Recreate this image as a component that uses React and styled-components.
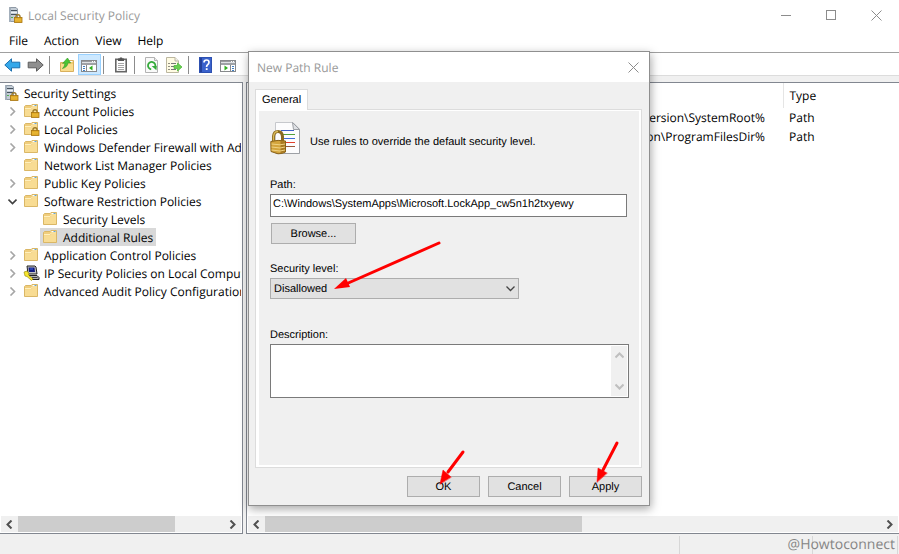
import React, { useState } from 'react';
import styled, { createGlobalStyle } from 'styled-components';

const GlobalStyle = createGlobalStyle`
  * {
    box-sizing: border-box;
  }

  body {
    margin: 0;
    background: #f0f0f0;
    color: #000;
    font-family: 'Open Sans', 'Noto Sans', sans-serif;
    font-size: 12px;
    text-rendering: geometricPrecision;
  }

  button, input, select, textarea {
    font: inherit;
    color: inherit;
    margin: 0;
    padding: 0;
    border: none;
    border-radius: 0;
    background: none;
    outline: none;
    text-rendering: inherit;
  }

  svg {
    display: block;
    flex: none;
  }
`;

/* --- Main window --- */
const Window = styled.div`
  position: relative;
  display: flex;
  flex-direction: column;
  min-height: 100vh;
  overflow: hidden;
`;

const TitleBar = styled.header`
  display: flex;
  align-items: center;
  height: 30px;
  padding-left: 8px;
  background: #fff;
  color: #999;
`;

const WindowTitle = styled.h1`
  flex: 1;
  margin: 0 0 0 4px;
  font-size: 12px;
  font-weight: 400;
`;

const CaptionButton = styled.button`
  display: flex;
  align-items: center;
  justify-content: center;
  width: ${props => props.$width || 45}px;
  height: 28px;
  color: #8c8c8c;
`;

const MenuBar = styled.nav`
  display: flex;
  align-items: center;
  gap: 16px;
  height: 22px;
  padding-left: 9px;
  background: #fff;
`;

const MenuItem = styled.button`
  line-height: 20px;
`;

const Toolbar = styled.div`
  display: flex;
  align-items: center;
  height: 24px;
  padding: 1px 0 0 1px;
  background: #fff;
  border-top: 1px solid #a0a0a0;
  border-bottom: 1px solid #dcdcdc;
`;

const ToolButton = styled.button`
  display: flex;
  align-items: center;
  justify-content: center;
  width: 23px;
  height: 21px;
  border: 1px solid ${props => (props.$active ? '#99d1ff' : 'transparent')};
  background: ${props => (props.$active ? '#cce8ff' : 'transparent')};
`;

const ToolSeparator = styled.span`
  width: 1px;
  height: 18px;
  margin: 0 5px 0 2px;
  background: #8c8c8c;
`;

const Panes = styled.main`
  display: flex;
  flex: 1;
  gap: 3px;
  padding-top: 6px;
`;

const Pane = styled.section`
  display: flex;
  flex-direction: column;
  flex: ${props => (props.$width ? `0 0 ${props.$width}px` : '1')};
  min-width: 0;
  background: #fff;
  border: 1px solid #828790;
  border-left-width: ${props => (props.$flush ? 0 : 1)}px;
  border-right-width: ${props => (props.$flush ? 1 : 0)}px;
  overflow: hidden;
`;

const Tree = styled.ul`
  flex: 1;
  margin: 0 1px 0 0;
  padding: 1px 0 0;
  list-style: none;
  overflow: hidden;
`;

const TreeRow = styled.li`
  display: flex;
  align-items: center;
  height: 18px;
  padding-left: ${props => 2 + props.$level * 19}px;
  white-space: nowrap;
`;

const Expander = styled.span`
  display: flex;
  flex: none;
  justify-content: center;
  width: 18px;
  margin-left: -18px;
`;

const TreeLabel = styled.span`
  display: flex;
  flex: none;
  align-items: center;
  gap: 4px;
  height: 18px;
  padding: 0 3px 0 2px;
  background: ${props => (props.$selected ? '#d9d9d9' : 'transparent')};
`;

const RuleTable = styled.table`
  width: 100%;
  border-collapse: collapse;
  table-layout: fixed;

  th, td {
    padding: 0 0 0 6px;
    font-weight: 400;
    text-align: left;
    white-space: nowrap;
  }

  th {
    height: 25px;
  }

  th:first-child {
    width: 536px;
    border-right: 1px solid #e5e5e5;
  }

  td {
    height: 19px;
  }

  td:first-child {
    padding-right: 18px;
    text-align: right;
  }
`;

const TableArea = styled.div`
  flex: 1;
`;

const ScrollRail = styled.div`
  display: flex;
  align-items: stretch;
  height: 17px;
  margin: 0 1px 0 1px;
  background: #f0f0f0;
  border-bottom: 1px solid #fff;
`;

const ScrollButton = styled.button`
  display: flex;
  align-items: center;
  justify-content: center;
  width: 17px;
  color: #505050;
`;

const ScrollTrack = styled.div`
  flex: 1;
`;

const ScrollThumb = styled.div`
  width: ${props => props.$size};
  height: 100%;
  background: #cdcdcd;
`;

const StatusBar = styled.footer`
  position: relative;
  display: flex;
  height: 20px;
  padding: 2px 1px 0 0;
`;

const StatusCell = styled.div`
  flex: ${props => (props.$width ? `0 0 ${props.$width}px` : '1')};
  border-right: 1px solid #d7d7d7;
`;

const Watermark = styled.span`
  position: absolute;
  right: 4px;
  bottom: 0;
  color: #858585;
  font-size: 14px;
  line-height: 18px;
`;

/* --- New Path Rule dialog --- */
const Dialog = styled.div`
  position: absolute;
  top: 51px;
  left: 248px;
  width: 402px;
  background: #f0f0f0;
  border: 1px solid #8f8f8f;
  box-shadow: 1px 3px 9px rgba(0, 0, 0, 0.35);
  font-family: 'Liberation Sans', Arial, sans-serif;
  font-size: 11px;
`;

const DialogTitleBar = styled.div`
  display: flex;
  align-items: center;
  justify-content: space-between;
  height: 30px;
  padding-left: 8px;
  background: #fff;
  color: #999;
  font-family: 'Open Sans', 'Noto Sans', sans-serif;
`;

const DialogTitle = styled.h2`
  margin: 0;
  font-size: 12px;
  font-weight: 400;
`;

const DialogBody = styled.form`
  padding: 7px 7px 8px 6px;
`;

const TabList = styled.div`
  display: flex;
`;

const Tab = styled.button`
  position: relative;
  height: 21px;
  margin-bottom: -1px;
  padding: 0 6px 1px;
  background: #fff;
  border: 1px solid #dcdcdc;
  border-bottom: none;
`;

const TabPanel = styled.div`
  border: 1px solid #dcdcdc;
  background: #fff;
  padding: 1px 2px 2px 3px;
`;

const PanelContent = styled.div`
  display: flex;
  flex-direction: column;
  align-items: flex-start;
  height: 354px;
  padding: 11px 10px 0 11px;
  background: #f0f0f0;
`;

const Intro = styled.div`
  display: flex;
  align-items: center;
  gap: 8px;
  margin-bottom: 23px;
`;

const IntroText = styled.p`
  margin: 6px 0 0;
`;

const FieldLabel = styled.label`
  line-height: 14px;
  margin-bottom: 2px;
`;

const PathInput = styled.input`
  align-self: stretch;
  height: 23px;
  margin-right: 2px;
  padding: 0 2px 3px;
  background: #fff;
  border: 1px solid #7a7a7a;
`;

const PushButton = styled.button`
  width: ${props => props.$width || 73}px;
  height: 21px;
  background: #e1e1e1;
  border: 1px solid #adadad;
`;

const BrowseRow = styled.div`
  padding: 6px 1px 18px;
`;

const SelectBox = styled.div`
  position: relative;
  width: 249px;
  margin-bottom: 29px;

  svg {
    position: absolute;
    top: 6px;
    right: 4px;
    pointer-events: none;
  }
`;

const LevelSelect = styled.select`
  appearance: none;
  display: block;
  width: 100%;
  height: 21px;
  padding: 0 20px 0 3px;
  background: #e1e1e1;
  border: 1px solid #adadad;
`;

const TextBox = styled.div`
  display: flex;
  align-self: stretch;
  height: 54px;
  padding: 1px;
  background: #fff;
  border: 1px solid #7a7a7a;
`;

const DescriptionArea = styled.textarea`
  flex: 1;
  min-width: 0;
  padding: 2px;
  resize: none;
  overflow: hidden;
`;

const VerticalRail = styled.div`
  display: flex;
  flex-direction: column;
  align-items: center;
  justify-content: space-between;
  width: 16px;
  padding: 5px 0;
  background: #f0f0f0;
  color: #bfbfbf;
`;

const DialogButtons = styled.div`
  display: flex;
  justify-content: flex-end;
  gap: 8px;
  margin-top: 8px;
`;

const Callouts = styled.svg`
  position: absolute;
  top: 0;
  left: 0;
  pointer-events: none;
`;

/* --- Icons --- */
const Chevron = ({ dir = 'right', size = 9, color = 'currentColor', weight = 2 }) => {
  const paths = {
    right: 'M2.5 0.5 L6.5 4.5 L2.5 8.5',
    left: 'M6.5 0.5 L2.5 4.5 L6.5 8.5',
    down: 'M0.5 2.5 L4.5 6.5 L8.5 2.5',
    up: 'M0.5 6.5 L4.5 2.5 L8.5 6.5',
  };
  return (
    <svg width={size} height={size} viewBox="0 0 9 9" fill="none" stroke={color} strokeWidth={weight}>
      <path d={paths[dir]} />
    </svg>
  );
};

const Padlock = ({ x, y }) => (
  <g transform={`translate(${x} ${y})`}>
    <path d="M2 4 V2.5 Q2 .7 4 .7 Q6 .7 6 2.5 V4" fill="none" stroke="#9b7a2a" strokeWidth="1.4" />
    <rect x="0.5" y="3.5" width="7.5" height="5" fill="#dda31b" stroke="#a87410" strokeWidth=".8" />
    <path d="M1 5.2 H7.5 M1 6.9 H7.5" stroke="#f5cf5a" strokeWidth=".6" />
  </g>
);

const ServerIcon = () => (
  <svg width="16" height="16" viewBox="0 0 16 16">
    <path d="M1.5 .5 H8 L9.5 2 V14.5 H1.5 Z" fill="#c3ccd5" stroke="#8e99a5" />
    <path d="M1 .5 H3 V15 H1 Z" fill="#a3afbb" />
    <path d="M3 3.5 H9 M3 7.5 H9" stroke="#46525e" />
    <path d="M3 5.5 H9" stroke="#eef2f5" />
    <rect x="3" y="10" width="2" height="1" fill="#4fb04f" />
    <Padlock x="6" y="7" />
  </svg>
);

const FolderIcon = ({ locked }) => (
  <svg width="17" height="16" viewBox="0 0 17 16">
    <path d="M1.5 13.5 V3.5 L2.5 2.5 H8 L9 1.5 H14.5 V13.5 Z" fill="#f0cd7c" stroke="#dab766" />
    <path d="M9.5 2.5 H13.5" stroke="#fff" />
    <path d="M11.5 2.5 H13.5" stroke="#5fa6d8" />
    <path d="M2 5.5 H8 L9.3 4 H14" fill="none" stroke="#fff0bd" />
    <path d="M2 6.2 H8.3 L9.6 4.8 H14 V13 H2 Z" fill="#f8dc93" />
    {locked && <Padlock x="8" y="6" />}
  </svg>
);

const IpPolicyIcon = () => (
  <svg width="17" height="16" viewBox="0 0 17 16">
    <path d="M4 1 H12 L13 2 L14 9 H5 Z" fill="#c4c4c4" stroke="#222" />
    <path d="M5.5 2.5 H11.5 L12 7 H6 Z" fill="#101a80" />
    <path d="M7 4 H10" stroke="#3d66e0" />
    <path d="M6 10.5 H14 L16 12.5 V14.5 H8 Z" fill="#b2b2b2" stroke="#222" />
    <path d="M9 12.5 H14.5" stroke="#444" />
    <path d="M1 7 L4 6 L6 8.5 L5.5 10 L10 14 L8.5 15.5 L4 11.5 L2 11 Z" fill="#f6e52e" stroke="#8f8100" strokeWidth=".6" />
  </svg>
);

const ArrowIcon = ({ fill, stroke, flip }) => (
  <svg width="17" height="16" viewBox="0 0 17 16">
    <path
      d="M.8 8 L7.5 1.8 V5.2 H15.8 V10.8 H7.5 V14.2 Z"
      fill={fill}
      stroke={stroke}
      strokeLinejoin="round"
      transform={flip ? 'translate(17 0) scale(-1 1)' : undefined}
    />
  </svg>
);

const FolderUpIcon = () => (
  <svg width="16" height="16" viewBox="0 0 16 16">
    <path d="M1.5 14.5 V5.5 H8 L9.5 3.5 H14.5 V14.5 Z" fill="#f0cb73" stroke="#d9b05c" />
    <path d="M2 7 H14 V14 H2 Z" fill="#f9dc8d" />
    <path d="M10 4.5 H13.5" stroke="#fff" />
    <path d="M3.5 11.5 Q5.8 9.5 6 6 L3.6 6.4 L8.5 1 L11.6 6 L9 5.8 Q8.5 10.2 3.5 11.5 Z" fill="#4cc534" stroke="#2c9a22" strokeWidth=".6" />
  </svg>
);

const ConsoleIcon = ({ right }) => (
  <svg width="17" height="16" viewBox="0 0 17 16">
    <rect x=".5" y="3.5" width="15" height="11" fill="#fff" stroke="#87898c" />
    <path d="M1 4.5 H15" stroke="#9b9da0" />
    <path d="M1 5.5 H15" stroke="#dfe2e5" />
    <path d="M1 6.5 H15 M1 7.5 H15" stroke="#9fa2a6" />
    <path d="M11 4.5 H12 M13 4.5 H14" stroke="#fff" />
    {right ? (
      <>
        <path d="M10.5 8 V14" stroke="#87898c" />
        <path d="M12 9.5 H14 M12 11.5 H14 M12 13.5 H14" stroke="#3f7fc4" />
        <path d="M4.5 8.5 L8 11 L4.5 13.5 Z" fill="#2fae1f" />
      </>
    ) : (
      <>
        <path d="M5.5 8 V14" stroke="#87898c" />
        <path d="M2 9.5 H4 M2 11.5 H4 M2 13.5 H4" stroke="#3f7fc4" />
        <path d="M11.5 8.5 L8 11 L11.5 13.5 Z" fill="#2fae1f" />
      </>
    )}
  </svg>
);

const ClipboardIcon = () => (
  <svg width="14" height="16" viewBox="0 0 14 16">
    <rect x="1.8" y="2.3" width="10.4" height="12.4" fill="#fff" stroke="#666" strokeWidth="1.6" />
    <path d="M4 1.5 H5.5 L6 .5 H8 L8.5 1.5 H10 V4 H4 Z" fill="#555" />
    <path d="M4 6.5 H10 M4 8.5 H10 M4 10.5 H10 M4 12.5 H10" stroke="#a6a6a6" />
  </svg>
);

const RefreshIcon = () => (
  <svg width="14" height="16" viewBox="0 0 14 16">
    <path d="M.5 .5 H9.5 L12.5 3.5 V15.5 H.5 Z" fill="#fafafa" stroke="#b3b3b3" />
    <path d="M9.5 .5 V3.5 H12.5" fill="#ececec" stroke="#b3b3b3" />
    <path d="M6.2 12.3 A3.7 3.7 0 1 1 10.2 9.8" fill="none" stroke="#35ab3b" strokeWidth="1.8" />
    <path d="M6.6 9 L11.8 9 L11.4 13.2 Z" fill="#35ab3b" />
  </svg>
);

const ExportIcon = () => (
  <svg width="17" height="16" viewBox="0 0 17 16">
    <path d="M.5 .5 H9 L12.5 4 V15.5 H.5 Z" fill="#fffbe3" stroke="#bcb79f" />
    <path d="M9 .5 V4 H12.5" fill="#eee" stroke="#bcb79f" />
    <path d="M2.5 6.5 H3.5 M2.5 9.5 H3.5 M2.5 12.5 H3.5" stroke="#222" />
    <path d="M5 6.5 H10 M5 9.5 H9 M5 12.5 H10" stroke="#777" />
    <path d="M8 8.5 H11.5 V6 L16 10 L11.5 14 V11.5 H8 Z" fill="#6bd14e" stroke="#43b335" strokeWidth=".7" />
  </svg>
);

const HelpIcon = () => (
  <svg width="14" height="16" viewBox="0 0 14 16">
    <rect x=".5" y=".5" width="12" height="15" fill="#3a62cc" stroke="#2d50b0" />
    <path d="M1 1 H3 V15 H1 Z" fill="#24419a" />
    <path d="M5 5.5 Q5 3 7.5 3 Q10 3 10 5.3 Q10 6.8 8.6 7.7 Q7.6 8.3 7.6 10" fill="none" stroke="#fff" strokeWidth="1.7" />
    <rect x="6.8" y="11.2" width="1.8" height="1.8" fill="#fff" />
  </svg>
);

const PolicyIcon = () => (
  <svg width="32" height="33" viewBox="0 0 32 33">
    <path d="M5.5 .5 H23 L29.5 7 V31.5 H5.5 Z" fill="#fcfcfd" stroke="#c6c8cc" />
    <path d="M29.5 7 V31.5 H6" fill="none" stroke="#9da0a5" />
    <path d="M22.5 .5 L23.5 7.5 L29.5 7.5 Z" fill="#dfe1e5" stroke="#9da0a5" />
    <path d="M11 8.5 H24" stroke="#3f5fc4" />
    <path d="M12 12.5 H25" stroke="#52a03c" />
    <path d="M12 16.5 H25" stroke="#3f6ed8" />
    <path d="M14 20.5 H25" stroke="#e2402c" />
    <path d="M15 24.5 H25" stroke="#96573c" />
    <path d="M3.5 20 V14.5 Q4 9.5 8 9.5 Q12 9.5 12.5 14.5 V20" fill="none" stroke="#8a6a20" strokeWidth="3" />
    <path d="M3.5 20 V14.5 Q4 9.5 8 9.5" fill="none" stroke="#d9b95a" strokeWidth="1.3" />
    <path d="M.8 19.5 Q8 17.5 15.5 19 V30 Q12 32 8 31.8 L1 29.5 Z" fill="#d3a43c" stroke="#8a6218" />
    <path d="M10.5 19 L15 19.5 V30 L10.5 31.2 Z" fill="#a97a22" />
    <path d="M1.5 22 L10 22.8 L15 22 M1.5 25 L10 26 L15 25 M1.5 28 L10 29 L15 28" fill="none" stroke="#f0d283" />
  </svg>
);

const MinimizeIcon = () => (
  <svg width="11" height="11" viewBox="0 0 11 11" stroke="currentColor"><path d="M0 5.5 H10" /></svg>
);

const MaximizeIcon = () => (
  <svg width="11" height="11" viewBox="0 0 11 11" fill="none" stroke="currentColor">
    <rect x=".5" y=".5" width="9" height="9" />
  </svg>
);

const CloseIcon = () => (
  <svg width="11" height="11" viewBox="0 0 11 11" stroke="currentColor">
    <path d="M.5 .5 L10.5 10.5 M10.5 .5 L.5 10.5" />
  </svg>
);

/* --- Data --- */
const treeItems = [
  { label: 'Security Settings', level: 0, icon: 'server' },
  { label: 'Account Policies', level: 1, icon: 'locked', expander: 'right' },
  { label: 'Local Policies', level: 1, icon: 'locked', expander: 'right' },
  { label: 'Windows Defender Firewall with Advanced Security', level: 1, icon: 'folder', expander: 'right' },
  { label: 'Network List Manager Policies', level: 1, icon: 'folder' },
  { label: 'Public Key Policies', level: 1, icon: 'folder', expander: 'right' },
  { label: 'Software Restriction Policies', level: 1, icon: 'folder', expander: 'down' },
  { label: 'Security Levels', level: 2, icon: 'folder' },
  { label: 'Additional Rules', level: 2, icon: 'folder', selected: true },
  { label: 'Application Control Policies', level: 1, icon: 'folder', expander: 'right' },
  { label: 'IP Security Policies on Local Computer', level: 1, icon: 'ip', expander: 'right' },
  { label: 'Advanced Audit Policy Configuration', level: 1, icon: 'folder', expander: 'right' },
];

const treeIcons = {
  server: <ServerIcon />,
  locked: <FolderIcon locked />,
  folder: <FolderIcon />,
  ip: <IpPolicyIcon />,
};

const rules = [
  { name: '\\CurrentVersion\\SystemRoot%', type: 'Path' },
  { name: '\\CurrentVersion\\ProgramFilesDir%', type: 'Path' },
];

const HorizontalScrollbar = ({ size }) => (
  <ScrollRail>
    <ScrollButton aria-label="Scroll left"><Chevron dir="left" /></ScrollButton>
    <ScrollTrack><ScrollThumb $size={size} /></ScrollTrack>
    <ScrollButton aria-label="Scroll right"><Chevron /></ScrollButton>
  </ScrollRail>
);

const PathRuleDialog = () => {
  const [path, setPath] = useState('C:\\Windows\\SystemApps\\Microsoft.LockApp_cw5n1h2txyewy');
  const [level, setLevel] = useState('Disallowed');
  const [description, setDescription] = useState('');

  return (
    <Dialog role="dialog" aria-labelledby="dialog-title">
      <DialogTitleBar>
        <DialogTitle id="dialog-title">New Path Rule</DialogTitle>
        <CaptionButton $width={31} aria-label="Close"><CloseIcon /></CaptionButton>
      </DialogTitleBar>

      <DialogBody onSubmit={e => e.preventDefault()}>
        <TabList role="tablist">
          <Tab type="button" role="tab" aria-selected="true">General</Tab>
        </TabList>
        <TabPanel role="tabpanel">
          <PanelContent>
            <Intro>
              <PolicyIcon />
              <IntroText>Use rules to override the default security level.</IntroText>
            </Intro>

            <FieldLabel htmlFor="path">Path:</FieldLabel>
            <PathInput id="path" value={path} spellCheck={false} onChange={e => setPath(e.target.value)} />
            <BrowseRow>
              <PushButton type="button" $width={85}>Browse...</PushButton>
            </BrowseRow>

            <FieldLabel htmlFor="level">Security level:</FieldLabel>
            <SelectBox>
              <LevelSelect id="level" value={level} onChange={e => setLevel(e.target.value)}>
                <option>Disallowed</option>
                <option>Basic User</option>
                <option>Unrestricted</option>
              </LevelSelect>
              <Chevron dir="down" color="#444" weight={1.3} />
            </SelectBox>

            <FieldLabel htmlFor="description">Description:</FieldLabel>
            <TextBox>
              <DescriptionArea id="description" value={description} onChange={e => setDescription(e.target.value)} />
              <VerticalRail>
                <Chevron dir="up" />
                <Chevron dir="down" />
              </VerticalRail>
            </TextBox>
          </PanelContent>
        </TabPanel>

        <DialogButtons>
          <PushButton type="submit">OK</PushButton>
          <PushButton type="button">Cancel</PushButton>
          <PushButton type="button">Apply</PushButton>
        </DialogButtons>
      </DialogBody>

      {/* red arrows pointing at the level, OK and Apply */}
      <Callouts width="400" height="453" viewBox="0 0 400 453" fill="#f00" stroke="#f00" strokeWidth="3" strokeLinecap="round">
        <path d="M190 191 L97 232" />
        <path d="M85 237 L97 226 L101 235 Z" strokeWidth="0" />
        <path d="M214 400 L199 420" />
        <path d="M191 432 L194 418 L202 425 Z" strokeWidth="0.5" />
        <path d="M368 391 L354 418" />
        <path d="M348 430 L349 416 L358 421 Z" strokeWidth="0.5" />
      </Callouts>
    </Dialog>
  );
};

export default function App() {
  return (
    <Window>
      <GlobalStyle />
      <TitleBar>
        <ServerIcon />
        <WindowTitle>Local Security Policy</WindowTitle>
        <CaptionButton aria-label="Minimize"><MinimizeIcon /></CaptionButton>
        <CaptionButton aria-label="Maximize"><MaximizeIcon /></CaptionButton>
        <CaptionButton aria-label="Close"><CloseIcon /></CaptionButton>
      </TitleBar>

      <MenuBar>
        {['File', 'Action', 'View', 'Help'].map(item => (
          <MenuItem key={item}>{item}</MenuItem>
        ))}
      </MenuBar>

      <Toolbar>
        <ToolButton aria-label="Back"><ArrowIcon fill="#35a8ea" stroke="#1b6fae" /></ToolButton>
        <ToolButton aria-label="Forward"><ArrowIcon fill="#8f8f8f" stroke="#5c5c5c" flip /></ToolButton>
        <ToolSeparator />
        <ToolButton aria-label="Up one level"><FolderUpIcon /></ToolButton>
        <ToolButton aria-label="Show console tree" $active><ConsoleIcon /></ToolButton>
        <ToolSeparator />
        <ToolButton aria-label="Paste"><ClipboardIcon /></ToolButton>
        <ToolSeparator />
        <ToolButton aria-label="Refresh"><RefreshIcon /></ToolButton>
        <ToolButton aria-label="Export list"><ExportIcon /></ToolButton>
        <ToolSeparator />
        <ToolButton aria-label="Help"><HelpIcon /></ToolButton>
        <ToolButton aria-label="Show action pane"><ConsoleIcon right /></ToolButton>
      </Toolbar>

      <Panes>
        <Pane $width={243} $flush>
          <Tree>
            {treeItems.map(item => (
              <TreeRow key={item.label} $level={item.level}>
                {item.expander && (
                  <Expander>
                    <Chevron dir={item.expander} color={item.expander === 'down' ? '#404040' : '#a6a6a6'} weight={1.6} />
                  </Expander>
                )}
                <TreeLabel $selected={item.selected}>
                  {treeIcons[item.icon]}
                  {item.label}
                </TreeLabel>
              </TreeRow>
            ))}
          </Tree>
          <HorizontalScrollbar size="76%" />
        </Pane>

        <Pane>
          <TableArea>
            <RuleTable>
              <thead>
                <tr>
                  <th scope="col" aria-label="Name" />
                  <th scope="col">Type</th>
                </tr>
              </thead>
              <tbody>
                {rules.map(rule => (
                  <tr key={rule.name}>
                    <td>{rule.name}</td>
                    <td>{rule.type}</td>
                  </tr>
                ))}
              </tbody>
            </RuleTable>
          </TableArea>
          <HorizontalScrollbar size="51.5%" />
        </Pane>
      </Panes>

      <StatusBar>
        <StatusCell />
        <StatusCell $width={133} />
        <StatusCell $width={85} />
        <Watermark>@Howtoconnect</Watermark>
      </StatusBar>

      <PathRuleDialog />
    </Window>
  );
}
